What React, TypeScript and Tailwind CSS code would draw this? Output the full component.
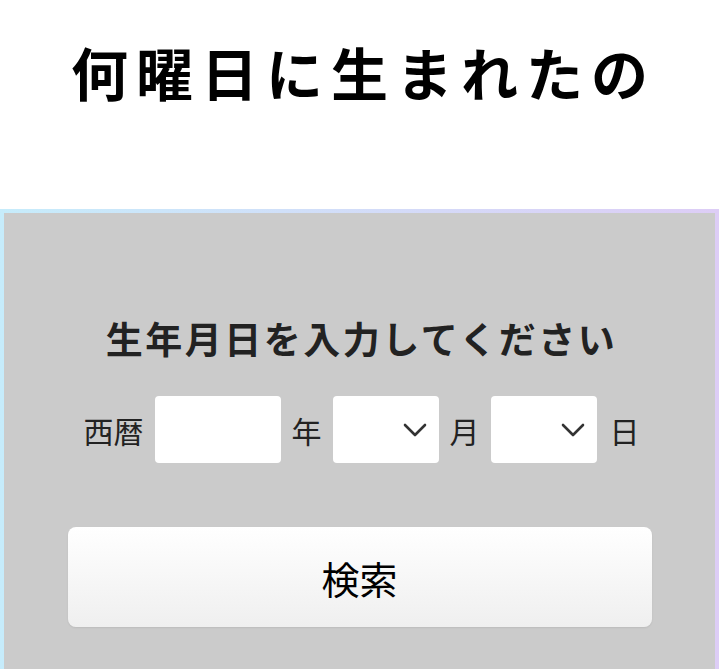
const jp = "font-['Noto_Sans_CJK_JP','Noto_Sans',sans-serif]";

function SelectBox() {
  return (
    <div className="flex h-[67px] w-[106px] items-center justify-end rounded-[4px] bg-white pr-[12px]">
      <svg width="24" height="14" viewBox="0 0 24 14" fill="none" className="text-[#333]">
        <path d="M2 2l10 10L22 2" stroke="currentColor" strokeWidth="2.6" strokeLinecap="round" strokeLinejoin="round" />
      </svg>
    </div>
  );
}

export default function App() {
  return (
    <div className={`min-h-[669px] bg-white ${jp}`}>
      <div className="flex h-[209px] justify-center pt-[32px]">
        <h1 className="ml-[8px] text-[57px] leading-[78px] font-bold tracking-[8px] text-black">
          何曜日に生まれたの
        </h1>
      </div>
      <div className="bg-gradient-to-r from-[#c6ecfb] to-[#ddcdf6] px-[4px] pt-[4px]">
        <div className="flex min-h-[470px] flex-col items-center bg-[#cbcbcb] pt-[101px]">
          <h2 className="ml-[4px] text-[37px] leading-[48px] font-bold tracking-[2.5px] text-[#222]">
            生年月日を入力してください
          </h2>
          <div className="mt-[34px] ml-[4px] flex items-center text-[30px] leading-none text-[#222]">
            <span className="mr-[11px]">西暦</span>
            <div className="h-[67px] w-[126px] rounded-[4px] bg-white" />
            <span className="mx-[11px]">年</span>
            <SelectBox />
            <span className="mx-[11px]">月</span>
            <SelectBox />
            <span className="ml-[13px]">日</span>
          </div>
          <button className="mt-[64px] flex h-[100px] w-[584px] items-center justify-center rounded-[8px] bg-gradient-to-b from-white to-[#efefef] text-[38px] text-black shadow-[0_1px_2px_rgba(0,0,0,0.08)]">
            検索
          </button>
        </div>
      </div>
    </div>
  );
}
